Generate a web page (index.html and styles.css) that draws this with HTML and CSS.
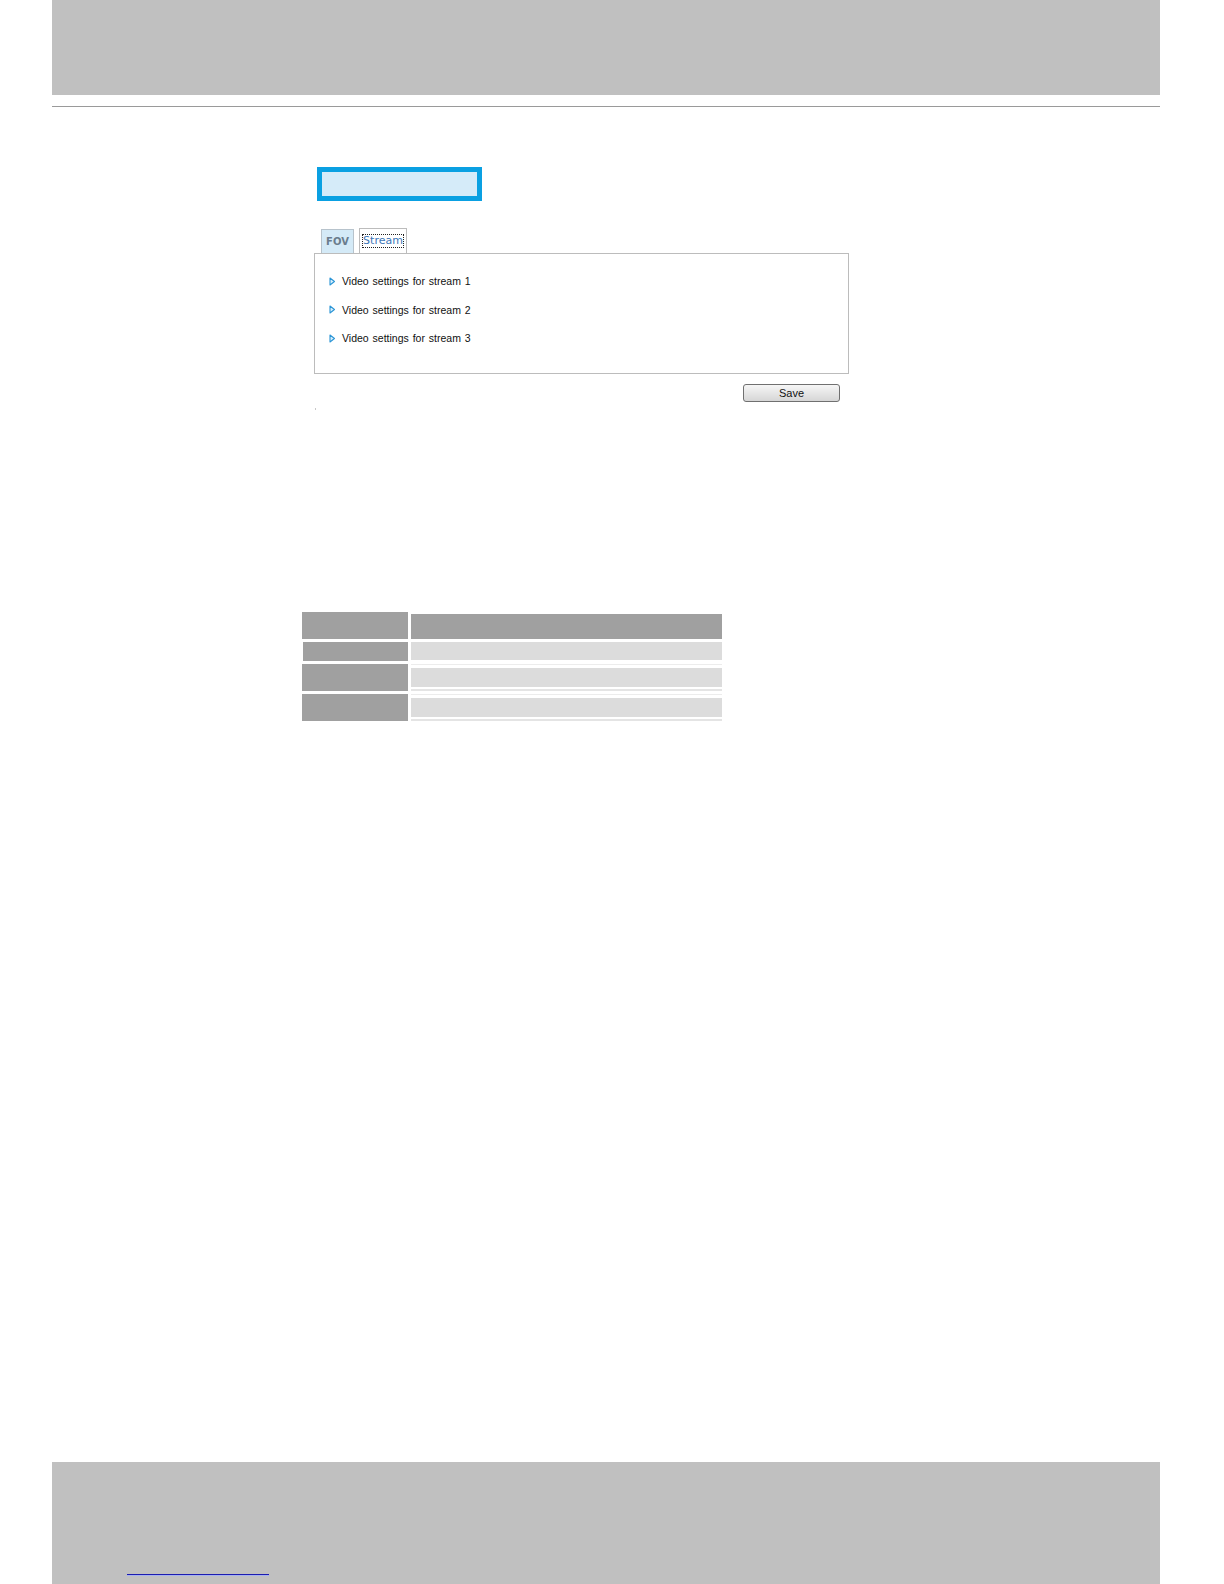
FILE: index.html
```html
<!DOCTYPE html>
<html lang="en">
<head>
<meta charset="utf-8">
<title>Video settings</title>
<link rel="stylesheet" href="styles.css">
</head>
<body>
<div class="page">
  <header class="top-band"></header>
  <div class="rule"></div>

  <main class="content">
    <div class="title-box"></div>

    <div class="tabs">
      <span class="tab tab-fov">FOV</span>
      <span class="tab tab-stream"><span class="focus">Stream</span></span>
    </div>

    <div class="panel">
      <ul class="stream-list">
        <li><svg class="arrow" width="7" height="9" viewBox="0 0 7 9"><polygon points="1,1 5.5,4.5 1,8" fill="#d8eefb" stroke="#2b95d6" stroke-width="1.1" stroke-linejoin="round"/></svg>Video settings for stream 1</li>
        <li><svg class="arrow" width="7" height="9" viewBox="0 0 7 9"><polygon points="1,1 5.5,4.5 1,8" fill="#d8eefb" stroke="#2b95d6" stroke-width="1.1" stroke-linejoin="round"/></svg>Video settings for stream 2</li>
        <li><svg class="arrow" width="7" height="9" viewBox="0 0 7 9"><polygon points="1,1 5.5,4.5 1,8" fill="#d8eefb" stroke="#2b95d6" stroke-width="1.1" stroke-linejoin="round"/></svg>Video settings for stream 3</li>
      </ul>
    </div>

    <div class="actions">
      <button class="save" type="button">Save</button>
    </div>
    <div class="tick"></div>
  </main>

  <div class="grid">
    <div class="cell key head"></div>
    <div class="cell val head"></div>
    <div class="cell key row-a"></div>
    <div class="cell val row-a"></div>
    <div class="cell key"></div>
    <div class="cell val row-b"></div>
    <div class="cell key"></div>
    <div class="cell val row-b"></div>
  </div>

  <footer class="bottom-band">
    <a class="link-line" href="#"></a>
  </footer>
</div>
</body>
</html>
```

FILE: styles.css
```css
html, body {
  margin: 0;
  padding: 0;
  background: #ffffff;
}

.page {
  width: 1224px;
  height: 1584px;
  display: flex;
  flex-direction: column;
  font-family: "Liberation Sans", Arial, sans-serif;
}

.top-band {
  height: 95px;
  margin: 0 64px 0 52px;
  background: #c0c0c0;
}

.rule {
  height: 1px;
  margin: 11px 64px 0 52px;
  background: #9a9a9a;
}

.content {
  padding-left: 314px;
  padding-top: 60px;
}

.title-box {
  box-sizing: border-box;
  width: 165px;
  height: 34px;
  margin-left: 3px;
  border: 5px solid #0aa0e2;
  background: #d5ebf9;
}

.tabs {
  display: flex;
  align-items: flex-end;
  gap: 5px;
  margin-top: 27px;
  margin-left: 7px;
}

.tab {
  box-sizing: border-box;
  height: 24px;
  border: 1px solid #bcbcbc;
  border-bottom: none;
  display: flex;
  align-items: center;
  justify-content: center;
  font-family: "DejaVu Sans", Verdana, sans-serif;
  font-size: 11px;
}

.tab-fov {
  width: 33px;
  background: #d4eaf7;
  color: #6a7c8d;
  border-color: #b7c3cc;
  font-weight: bold;
  font-size: 10px;
}

.tab-stream {
  width: 48px;
  height: 25px;
  background: #ffffff;
  color: #3d76b8;
}

.focus {
  outline: 1px dotted #222222;
  padding: 0;
  line-height: 12px;
}

.panel {
  box-sizing: border-box;
  width: 535px;
  height: 121px;
  border: 1px solid #bcbcbc;
}

.stream-list {
  list-style: none;
  margin: 0;
  padding: 13px 0 0 14px;
}

.stream-list li {
  display: flex;
  align-items: center;
  height: 28.5px;
  font-size: 10.5px;
  color: #111111;
  word-spacing: 1px;
}

.arrow {
  margin-right: 6px;
  flex: none;
}

.actions {
  width: 535px;
  display: flex;
  justify-content: flex-end;
  margin-top: 10px;
}

.save {
  box-sizing: border-box;
  width: 97px;
  height: 18px;
  margin-right: 9px;
  padding: 0;
  border: 1px solid #707070;
  border-radius: 3px;
  background: linear-gradient(#f6f6f6, #e6e6e6 50%, #d6d6d6);
  font-family: "Liberation Sans", Arial, sans-serif;
  font-size: 11px;
  color: #111111;
}

.tick {
  width: 1px;
  height: 2px;
  margin: 6px 0 0 1px;
  background: #c8c8c8;
}

.grid {
  display: grid;
  grid-template-columns: 106px 311px;
  grid-template-rows: 27px 19px 27px 27px;
  column-gap: 3px;
  row-gap: 3px;
  margin: 202px 0 0 302px;
}

.cell.key {
  background: #a0a0a0;
}

.cell.key.row-a {
  margin-left: 1px;
}

.cell.val.head {
  background: linear-gradient(#ffffff 0 2px, #a0a0a0 2px);
}

.cell.val.row-a {
  background: #dcdcdc;
  border-bottom: 1px solid #ffffff;
}

.cell.val.row-b {
  background: linear-gradient(#ececec 0 1px, #ffffff 1px 4px, #dcdcdc 4px 23px, #ffffff 23px 25px, #e4e4e4 25px);
}

.bottom-band {
  margin: auto 64px 0 52px;
  height: 122px;
  box-sizing: border-box;
  padding: 112px 0 0 75px;
  background: #c0c0c0;
}

.link-line {
  display: block;
  width: 142px;
  height: 1px;
  border-top: 1px solid #1c1cb0;
  background: #a6b2ee;
}
```
